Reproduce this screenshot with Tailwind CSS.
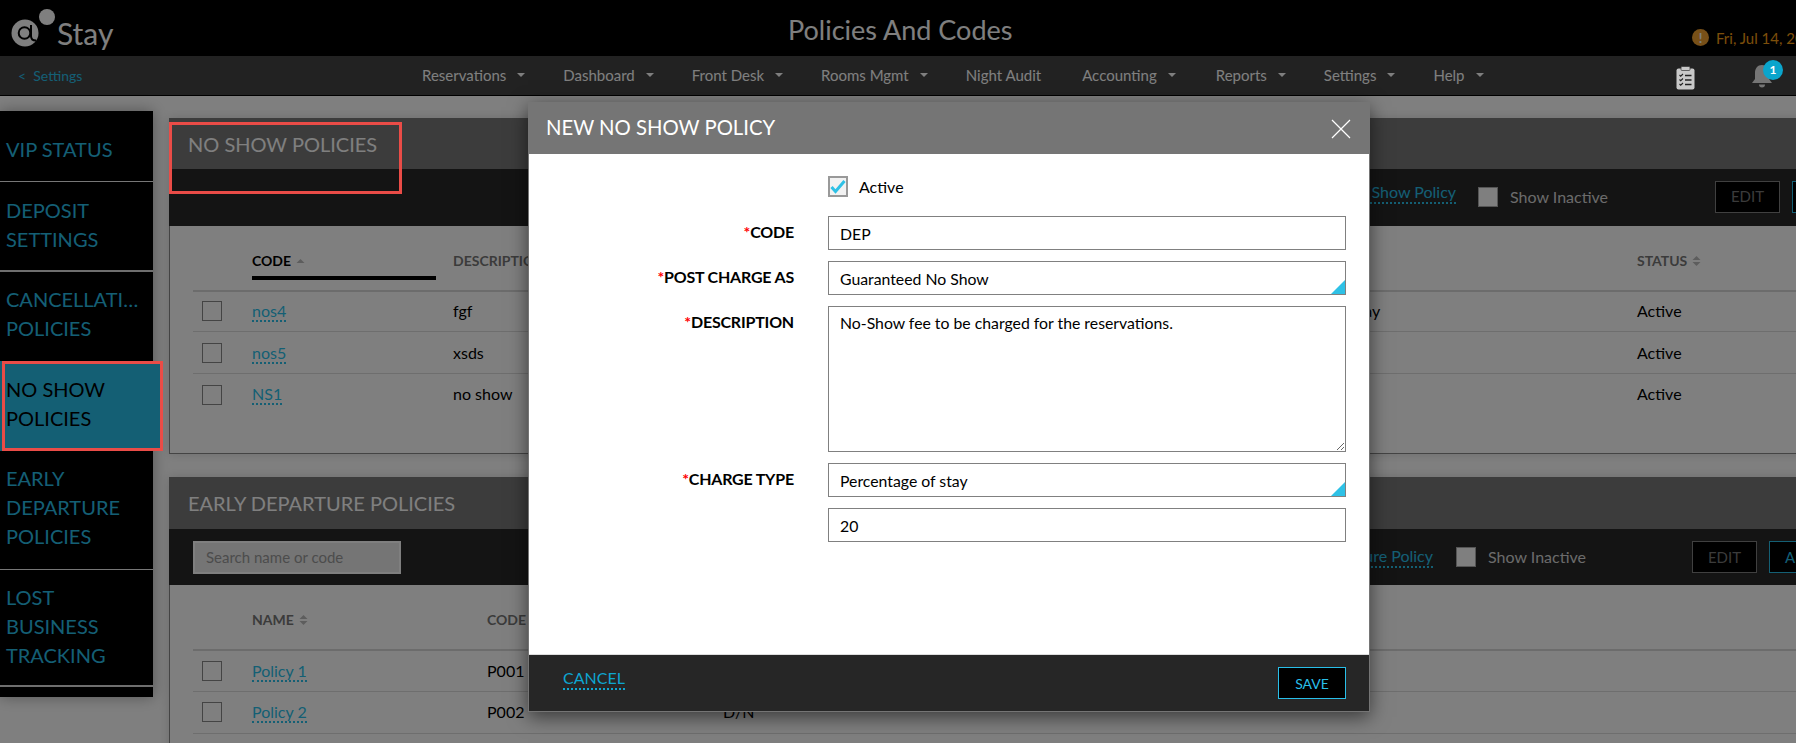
<!DOCTYPE html>
<html lang="en">
<head>
  <meta charset="UTF-8" />
  <title>Policies And Codes</title>
  <script src="https://cdn.jsdelivr.net/npm/@tailwindcss/browser@4"></script>
</head>
<body class="relative h-[743px] w-[1796px] overflow-hidden bg-white font-[Lato,sans-serif] text-black">
  <!-- Top header -->
  <header class="grid h-[56px] grid-cols-[788px_224px_1fr] bg-black text-white">
    <div class="flex items-start">
      <svg class="ml-[10px] mt-[7px] h-[42px] w-[48px]" viewBox="0 0 48 42">
        <circle cx="15" cy="26" r="13.5" fill="#fff" />
        <circle cx="37" cy="10" r="8" fill="#fff" />
        <circle cx="14.500" cy="26" r="5.800" fill="none" stroke="#000" stroke-width="2" />
        <path d="M21 18v11c0 3 1.500 4.500 5 4.500" fill="none" stroke="#000" stroke-width="2" />
      </svg>
      <span class="ml-[-1px] mt-[14px] text-[30px] leading-[38px]">Stay</span>
    </div>
    <h1 class="mt-[14px] whitespace-nowrap text-[27px] leading-[32px]">Policies And Codes</h1>
    <div class="flex items-start whitespace-nowrap pl-[680px] pt-[29px] text-[15px] leading-[18px] text-[#f69e16]">
      <span class="flex h-[17px] w-[17px] shrink-0 items-center justify-center rounded-full bg-[#f0a030] text-[13px] font-bold text-white">!</span>
      <span class="ml-[7px]">Fri, Jul 14, 2017</span>
    </div>
  </header>

  <!-- Nav bar -->
  <nav class="flex h-[40px] items-center border-b border-black bg-[#444] pb-px text-[15px] text-white">
    <a class="ml-[18px] w-[404px] text-[14px] text-[#29bfe9]">&lt;&nbsp;&nbsp;Settings</a>
    <div class="flex items-center gap-[38px]">
      <a class="flex items-center gap-[11px]">Reservations <svg class="h-[4px] w-[8px]" viewBox="0 0 8 4"><path d="M0 0h8L4 4z" fill="#fff" /></svg></a>
      <a class="flex items-center gap-[11px]">Dashboard <svg class="h-[4px] w-[8px]" viewBox="0 0 8 4"><path d="M0 0h8L4 4z" fill="#fff" /></svg></a>
      <a class="flex items-center gap-[11px]">Front Desk <svg class="h-[4px] w-[8px]" viewBox="0 0 8 4"><path d="M0 0h8L4 4z" fill="#fff" /></svg></a>
      <a class="flex items-center gap-[11px]">Rooms Mgmt <svg class="h-[4px] w-[8px]" viewBox="0 0 8 4"><path d="M0 0h8L4 4z" fill="#fff" /></svg></a>
      <a class="mr-[3px]">Night Audit</a>
      <a class="mr-[2px] flex items-center gap-[11px]">Accounting <svg class="h-[4px] w-[8px]" viewBox="0 0 8 4"><path d="M0 0h8L4 4z" fill="#fff" /></svg></a>
      <a class="flex items-center gap-[11px]">Reports <svg class="h-[4px] w-[8px]" viewBox="0 0 8 4"><path d="M0 0h8L4 4z" fill="#fff" /></svg></a>
      <a class="flex items-center gap-[11px]">Settings <svg class="h-[4px] w-[8px]" viewBox="0 0 8 4"><path d="M0 0h8L4 4z" fill="#fff" /></svg></a>
      <a class="flex items-center gap-[11px]">Help <svg class="h-[4px] w-[8px]" viewBox="0 0 8 4"><path d="M0 0h8L4 4z" fill="#fff" /></svg></a>
    </div>
  </nav>

  <!-- Page -->
  <main class="flex items-start">
    <aside class="mt-[15px] h-[586px] w-[153px] shrink-0 bg-black pt-[10px] text-[20px] leading-[29px] text-[#29bfe9] shadow-[0_0_14px_rgba(0,0,0,0.35)]">
      <a class="block border-b border-[#eee] pb-[17px] pl-[6px] pt-[14px]">VIP STATUS</a>
      <a class="block border-b-2 border-[#ddd] pb-[16px] pl-[6px] pt-[14px]">DEPOSIT<br />SETTINGS</a>
      <a class="block pb-[18px] pl-[6px] pt-[13px]"><span class="block w-[136px] truncate">CANCELLATION</span>POLICIES</a>
      <a class="block w-[163px] bg-[#29bfe9] pb-[18px] pl-[6px] pt-[14px] text-black">NO SHOW<br />POLICIES</a>
      <a class="block border-b border-[#eee] pb-[18px] pl-[6px] pt-[13px]">EARLY<br />DEPARTURE<br />POLICIES</a>
      <a class="block border-b-2 border-[#ddd] pb-[15px] pl-[6px] pt-[13px]">LOST<br />BUSINESS<br />TRACKING</a>
    </aside>

    <div class="ml-[16px] mt-[22px] w-[1700px] shrink-0">
      <!-- No show policies -->
      <section class="h-[336px] border border-t-0 border-[#888] shadow-[0_0_10px_rgba(0,0,0,0.15)]">
        <div class="-ml-px h-[51px] bg-[#787878] pl-[19px] pt-[12px] text-[20px] leading-[28px] text-white">NO SHOW POLICIES</div>
        <div class="-ml-px flex h-[57px] items-center justify-end bg-[#282828] pb-[2px] pr-[11px]">
          <a class="mb-[8px] mr-[22px] border-b-2 border-dotted border-[#29bfe9] text-[16px] leading-[20px] text-[#29bfe9]">New No Show Policy</a>
          <span class="h-[20px] w-[20px] border border-[#aaa] bg-white"></span>
          <span class="ml-[12px] mr-[107px] text-[16px] text-[#d6d6d6]">Show Inactive</span>
          <button class="h-[32px] w-[65px] border border-[#808080] bg-black text-[15px] text-[#777]">EDIT</button>
          <button class="ml-[12px] h-[32px] w-[65px] border border-[#29bfe9] bg-black text-[15px] text-[#29bfe9]">ADD</button>
        </div>
        <div class="ml-[23px]">
          <div class="grid h-[66px] grid-cols-[59px_201px_798px_386px_1fr] border-b-2 border-[#d8d8d8] text-[14px] font-bold leading-[20px] text-[#777]">
            <span></span>
            <div class="w-[184px]">
              <div class="flex items-center gap-[5px] border-b-4 border-black pb-[5px] pt-[25px] text-black">CODE <svg class="h-[4px] w-[9px]" viewBox="0 0 8 4"><path d="M4 0l4 4H0z" fill="#bbb" /></svg></div>
            </div>
            <span class="pt-[25px]">DESCRIPTION</span>
            <span class="pt-[25px]">CHARGE TYPE</span>
            <span class="flex items-start gap-[5px] pt-[25px]">STATUS
              <svg class="mt-[5px] h-[10px] w-[9px]" viewBox="0 0 8 10"><path d="M4 0l4 4H0zM0 6h8l-4 4z" fill="#bbb" /></svg>
            </span>
          </div>
          <div class="grid h-[40px] grid-cols-[59px_201px_798px_386px_1fr] items-center border-b border-[#ddd] pb-[1px] text-[16px]">
            <span class="ml-[9px] h-[20px] w-[20px] border border-[#888] bg-white"></span>
            <span><a class="border-b-2 border-dotted border-[#29bfe9] leading-[18px] text-[#29bfe9]">nos4</a></span>
            <span>fgf</span><span>Percentage of stay</span><span>Active</span>
          </div>
          <div class="grid h-[42px] grid-cols-[59px_201px_798px_386px_1fr] items-center border-b border-[#ddd] text-[16px]">
            <span class="ml-[9px] h-[20px] w-[20px] border border-[#888] bg-white"></span>
            <span><a class="border-b-2 border-dotted border-[#29bfe9] leading-[18px] text-[#29bfe9]">nos5</a></span>
            <span>xsds</span><span>Flat</span><span>Active</span>
          </div>
          <div class="grid h-[42px] grid-cols-[59px_201px_798px_386px_1fr] items-center pb-[2px] text-[16px]">
            <span class="ml-[9px] mt-[2px] h-[20px] w-[20px] border border-[#888] bg-white"></span>
            <span><a class="border-b-2 border-dotted border-[#29bfe9] leading-[18px] text-[#29bfe9]">NS1</a></span>
            <span>no show</span><span>Flat</span><span>Active</span>
          </div>
        </div>
      </section>

      <!-- Early departure policies -->
      <section class="mt-[23px] h-[400px] border border-t-0 border-[#888] shadow-[0_0_10px_rgba(0,0,0,0.15)]">
        <div class="-ml-px h-[52px] bg-[#787878] pl-[19px] pt-[12px] text-[20px] leading-[28px] text-white">EARLY DEPARTURE POLICIES</div>
        <div class="-ml-px flex h-[56px] items-center bg-[#282828] pl-[24px] pr-[34px]">
          <input class="h-[33px] w-[208px] border-2 border-[#fff] bg-[#eaeaea] px-[11px] text-[15px] placeholder:text-[#999]" placeholder="Search name or code" />
          <a class="ml-auto mr-[23px] border-b-2 border-dotted border-[#29bfe9] text-[16px] leading-[20px] text-[#29bfe9]">New Early Departure Policy</a>
          <span class="h-[20px] w-[20px] border border-[#aaa] bg-white"></span>
          <span class="ml-[12px] mr-[106px] text-[16px] text-[#d6d6d6]">Show Inactive</span>
          <button class="h-[32px] w-[65px] border border-[#808080] bg-black text-[15px] text-[#777]">EDIT</button>
          <button class="ml-[12px] h-[32px] w-[65px] border border-[#29bfe9] bg-black text-[15px] text-[#29bfe9]">ADD</button>
        </div>
        <div class="ml-[23px]">
          <div class="grid h-[66px] grid-cols-[59px_235px_236px_1fr] border-b-2 border-[#d8d8d8] text-[14px] font-bold leading-[20px] text-[#777]">
            <span></span>
            <span class="flex items-start gap-[5px] pt-[25px]">NAME
              <svg class="mt-[5px] h-[10px] w-[9px]" viewBox="0 0 8 10"><path d="M4 0l4 4H0zM0 6h8l-4 4z" fill="#bbb" /></svg>
            </span>
            <span class="pt-[25px]">CODE</span>
            <span class="pt-[25px]">TYPE</span>
          </div>
          <div class="grid h-[41px] grid-cols-[59px_235px_236px_1fr] items-center border-b border-[#ddd] pb-[1px] text-[16px]">
            <span class="ml-[9px] h-[20px] w-[20px] border border-[#888] bg-white"></span>
            <span><a class="border-b-2 border-dotted border-[#29bfe9] leading-[18px] text-[#29bfe9]">Policy 1</a></span>
            <span>P001</span><span>D/N</span>
          </div>
          <div class="grid h-[42px] grid-cols-[59px_235px_236px_1fr] items-center border-b border-[#ddd] pb-[1px] text-[16px]">
            <span class="ml-[9px] h-[20px] w-[20px] border border-[#888] bg-white"></span>
            <span><a class="border-b-2 border-dotted border-[#29bfe9] leading-[18px] text-[#29bfe9]">Policy 2</a></span>
            <span>P002</span><span>D/N</span>
          </div>
        </div>
      </section>
    </div>
  </main>

  <!-- Modal backdrop -->
  <div class="absolute inset-0 bg-black/50"></div>

  <!-- Icons that sit bright over the backdrop -->
  <svg class="absolute left-[1676px] top-[66px] h-[24px] w-[19px]" viewBox="0 0 19 24">
    <rect x="0.5" y="2.5" width="18" height="21" rx="2" fill="#c9c9c9" />
    <rect x="5" y="0.5" width="9" height="4" rx="1" fill="#c9c9c9" stroke="#333" stroke-width="0.7" />
    <path d="M3.500 9l1.200 1.200L7 8M3.500 13.500l1.200 1.200L7 12.500M3.500 18l1.200 1.200L7 17" fill="none" stroke="#222" stroke-width="1.100" />
    <path d="M9 9.500h6.500M9 14h6.500M9 18.500h6.500" stroke="#222" stroke-width="1.300" />
  </svg>
  <svg class="absolute left-[1751px] top-[64px] h-[25px] w-[22px]" viewBox="0 0 22 25">
    <path d="M11 1c4.500 0 7 3.500 7 8v6l3 4H1l3-4V9c0-4.500 2.500-8 7-8z" fill="#757575" />
    <path d="M8 20.500h6c0 2-1 3-3 3s-3-1-3-3z" fill="#757575" />
  </svg>
  <span class="absolute left-[1763px] top-[60px] flex h-[20px] w-[20px] items-center justify-center rounded-full bg-[#0ba5cc] text-[12px] font-bold text-white">1</span>

  <!-- New no show policy dialog -->
  <div class="absolute left-[528px] top-[102px] flex h-[610px] w-[842px] flex-col border border-[#757575] bg-white shadow-[0_5px_18px_rgba(0,0,0,0.55)]">
    <div class="flex h-[51px] shrink-0 items-center justify-between bg-[#757575] pl-[17px] pr-[18px] text-white">
      <h2 class="mb-[2px] text-[20.3px]">NEW NO SHOW POLICY</h2>
      <svg class="h-[20px] w-[20px]" viewBox="0 0 20 20"><path d="M1 1l18 18M19 1L1 19" stroke="#fff" stroke-width="1.200" fill="none" /></svg>
    </div>
    <div class="grid flex-1 grid-cols-[265px_518px] content-start gap-x-[34px] gap-y-[11px] pt-[22px] text-[15.8px]">
      <span></span>
      <label class="mb-[8px] flex h-[21px] items-center text-[16px]">
        <span class="flex h-[21px] w-[20px] items-center justify-center border-2 border-[#999] bg-[#f2f2f2]">
          <svg class="h-[15px] w-[17px]" viewBox="0 0 16 14"><path d="M1.500 7.500l4 4.500L14.500 1.500" fill="none" stroke="#2ec1e6" stroke-width="3" /></svg>
        </span>
        <span class="ml-[11px]">Active</span>
      </label>

      <label class="pt-[5px] text-right text-[16px] font-bold leading-[22px] tracking-[-0.2px]"><span class="text-[#f00]">*</span>CODE</label>
      <input class="h-[34px] border border-[#808080] px-[11px]" value="DEP" readonly />

      <label class="pt-[5px] text-right text-[16px] font-bold leading-[22px] tracking-[-0.2px]"><span class="text-[#f00]">*</span>POST CHARGE AS</label>
      <div class="relative">
        <input class="h-[34px] w-full border border-[#808080] px-[11px]" value="Guaranteed No Show" readonly />
        <svg class="absolute bottom-[1px] right-[1px] h-[14px] w-[14px]" viewBox="0 0 14 14"><path d="M14 0v14H0z" fill="#2ec1e6" /></svg>
      </div>

      <label class="pt-[5px] text-right text-[16px] font-bold leading-[22px] tracking-[-0.2px]"><span class="text-[#f00]">*</span>DESCRIPTION</label>
      <textarea class="h-[146px] border border-[#808080] px-[11px] py-[4px] leading-[24px]" readonly>No-Show fee to be charged for the reservations.</textarea>

      <label class="pt-[5px] text-right text-[16px] font-bold leading-[22px] tracking-[-0.2px]"><span class="text-[#f00]">*</span>CHARGE TYPE</label>
      <div class="relative">
        <input class="h-[34px] w-full border border-[#808080] px-[11px]" value="Percentage of stay" readonly />
        <svg class="absolute bottom-[1px] right-[1px] h-[14px] w-[14px]" viewBox="0 0 14 14"><path d="M14 0v14H0z" fill="#2ec1e6" /></svg>
      </div>

      <span></span>
      <input class="h-[34px] border border-[#808080] px-[11px]" value="20" readonly />
    </div>
    <div class="flex h-[57px] shrink-0 items-center justify-between border-t border-[#ddd] bg-[#262626] pl-[34px] pr-[23px]">
      <a class="mb-[8px] border-b-2 border-dotted border-[#0ea5d0] text-[16px] leading-[20px] text-[#0ea5d0]">CANCEL</a>
      <button class="h-[32px] w-[68px] border border-[#29bfe9] bg-black text-[14px] text-[#29bfe9]">SAVE</button>
    </div>
  </div>

  <!-- Red annotation boxes -->
  <div class="absolute left-[2px] top-[361px] h-[90px] w-[161px] border-[3px] border-[#ea4c47]"></div>
  <div class="absolute left-[169px] top-[122px] h-[72px] w-[233px] border-[3px] border-[#ea4c47]"></div>
</body>
</html>
